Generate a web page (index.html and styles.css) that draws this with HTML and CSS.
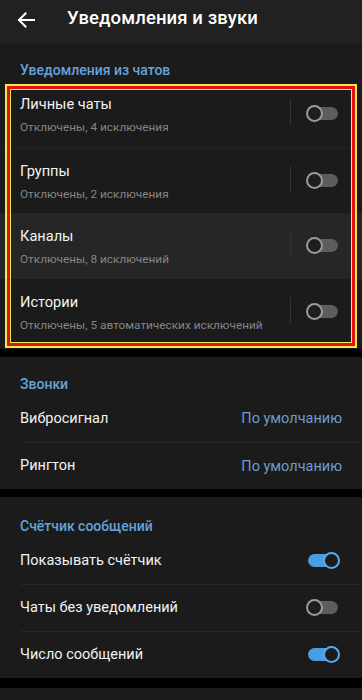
FILE: index.html
```html
<!DOCTYPE html>
<html lang="ru">
<head>
<meta charset="utf-8">
<link rel="stylesheet" href="styles.css">
</head>
<body>
<div class="screen">
  <header class="topbar">
    <svg class="back" width="18" height="16" viewBox="0 0 18 16"><path d="M17 8H2M8.5 1.5L2 8l6.5 6.5" fill="none" stroke="#fff" stroke-width="2" stroke-linecap="square"/></svg>
    <h1 class="title">Уведомления и звуки</h1>
  </header>

  <section class="section s1">
    <div class="sec-head">Уведомления из чатов</div>
    <div class="list">
      <div class="crow">
        <div class="ctext"><div class="rt">Личные чаты</div><div class="rs">Отключены, 4 исключения</div></div>
        <div class="vsep"></div>
        <div class="tg"><span class="track"></span><span class="knob"></span></div>
      </div>
      <div class="crow">
        <div class="ctext"><div class="rt">Группы</div><div class="rs">Отключены, 2 исключения</div></div>
        <div class="vsep"></div>
        <div class="tg"><span class="track"></span><span class="knob"></span></div>
      </div>
      <div class="crow hl">
        <div class="ctext"><div class="rt">Каналы</div><div class="rs">Отключены, 8 исключений</div></div>
        <div class="vsep"></div>
        <div class="tg"><span class="track"></span><span class="knob"></span></div>
      </div>
      <div class="crow">
        <div class="ctext"><div class="rt">Истории</div><div class="rs">Отключены, 5 автоматических исключений</div></div>
        <div class="vsep"></div>
        <div class="tg"><span class="track"></span><span class="knob"></span></div>
      </div>
      <div class="frame"><div class="frame-red"><div class="frame-in"></div></div></div>
    </div>
  </section>

  <section class="section s2">
    <div class="sec-head">Звонки</div>
    <div class="row"><span class="rt">Вибросигнал</span><span class="val">По умолчанию</span></div>
    <div class="row"><span class="rt">Рингтон</span><span class="val">По умолчанию</span></div>
  </section>

  <section class="section s3">
    <div class="sec-head">Счётчик сообщений</div>
    <div class="row"><span class="rt">Показывать счётчик</span><div class="tg on"><span class="track"></span><span class="knob"></span></div></div>
    <div class="row"><span class="rt">Чаты без уведомлений</span><div class="tg"><span class="track"></span><span class="knob"></span></div></div>
    <div class="row"><span class="rt">Число сообщений</span><div class="tg on"><span class="track"></span><span class="knob"></span></div></div>
  </section>

  <section class="section s4"></section>
</div>
</body>
</html>
```

FILE: styles.css
```css
* { box-sizing: border-box; margin: 0; padding: 0; }
html, body { background: #000; }
body {
  margin: 0;
  font-family: Roboto, "Noto Sans", "DejaVu Sans", sans-serif;
  color: #fff;
  width: 362px;
  height: 700px;
  overflow: hidden;
}
.screen { display: flex; flex-direction: column; }
.topbar {
  height: 43px;
  background: #212121;
  display: flex;
  align-items: center;
  padding-left: 17px;
}
.back { flex: none; margin-top: -4px; }
.title {
  margin-left: 32px;
  font-size: 18.5px;
  font-weight: 500;
  margin-top: -8px;
  letter-spacing: 0.1px;
}
.section { background: #1b1b1b; }
.s1 { padding-bottom: 4px; }
.s2 { margin-top: 8px; }
.s3 { margin-top: 8px; }
.s4 { margin-top: 10px; height: 20px; }
.sec-head {
  padding: 16px 20px 0;
  height: 38px;
  line-height: 22px;
  font-size: 14px;
  font-weight: 500;
  color: #65a3dc;
}
.s3 .sec-head { padding-top: 18px; height: 40px; }
.list { position: relative; }
.crow {
  height: 66px;
  display: flex;
  align-items: center;
  padding: 0 22px 0 20px;
  border-top: 1px solid #242424;
}
.crow:first-child { border-top: none; }
.crow.hl { background: #262626; border-top: none; }
.crow.hl + .crow { border-top: none; }
.ctext { flex: 1; display: flex; flex-direction: column; margin-top: 2px; }
.rt { font-size: 14.6px; color: #f2f2f2; line-height: 20px; }
.rs { font-size: 11.8px; color: #858585; line-height: 18px; margin-top: 4px; }
.vsep { width: 1px; height: 26px; background: #333; margin-right: 15px; margin-top: -4px; }
.tg { position: relative; width: 34px; height: 18px; flex: none; }
.track {
  position: absolute; left: 2px; top: 2px; width: 30px; height: 13px;
  border-radius: 7px; background: #5d5d5d;
}
.knob {
  position: absolute; left: 0; top: 0; width: 17px; height: 17px;
  border-radius: 50%; background: #1e1e1e; border: 2px solid #9a9a9a;
}
.tg.on .track { background: #4a9de0; }
.tg.on .knob { left: auto; right: 0; border-color: #5aaaea; background: #1b1b1b; }
.row {
  height: 47px;
  display: flex;
  align-items: center;
  justify-content: space-between;
  padding: 0 20px 0 0;
  border-top: 1px solid #262626;
  margin-left: 20px;
}
.row .rt { font-size: 14.5px; }
.sec-head + .row { border-top: none; }
.s3 .row { padding-right: 22px; }
.val { font-size: 14.5px; color: #6b9dcf; }
.frame {
  position: absolute;
  left: 5px; right: 5px; top: 3px; bottom: -3px;
  border: 2px solid #f4e84c;
  pointer-events: none;
}
.frame-red { width: 100%; height: 100%; border: 3px solid #e2140f; }
.frame-in { width: 100%; height: 100%; border: 1px solid #f4e84c; }
```
